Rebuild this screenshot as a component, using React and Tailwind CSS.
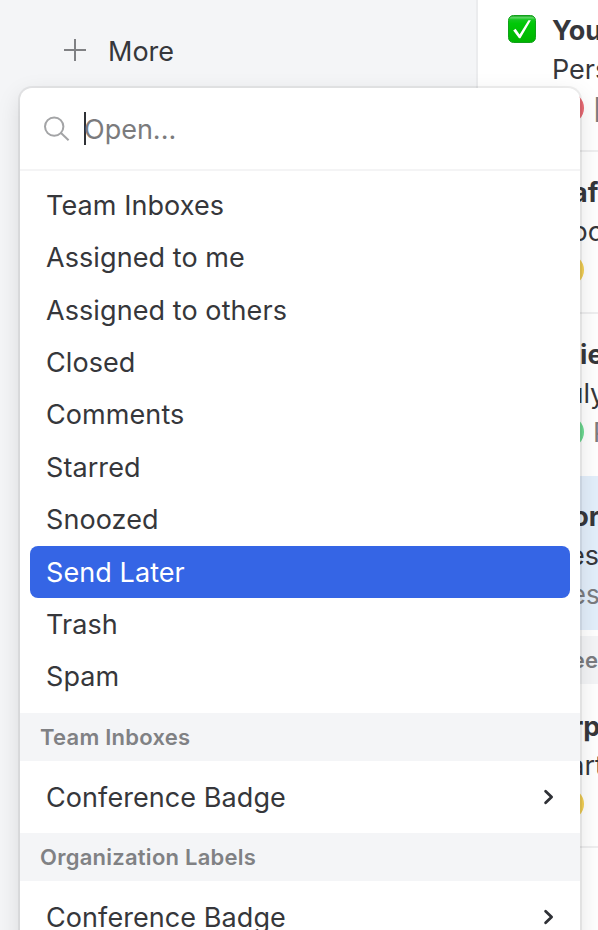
import React from 'react'
import clsx from 'clsx'

const views = [
  'Team Inboxes',
  'Assigned to me',
  'Assigned to others',
  'Closed',
  'Comments',
  'Starred',
  'Snoozed',
  'Send Later',
  'Trash',
  'Spam',
]

const sections = [
  { title: 'Team Inboxes', items: ['Conference Badge'] },
  { title: 'Organization Labels', items: ['Conference Badge'] },
]

const mails = [
  { from: 'You', subject: 'Pers', avatar: 'bg-[#ea6b75]', tag: '[', done: true },
  { from: 'Caf', subject: 'Doc', avatar: 'bg-[#f3d055]' },
  { from: 'Olie', subject: 'July', avatar: 'bg-[#6ddb92]', tag: 'P', last: true },
]

const CheckBadge = () => (
  <svg className="h-7 w-7" viewBox="0 0 28 28">
    <defs>
      <linearGradient id="badge" x1="0" y1="0" x2="0" y2="1">
        <stop offset="0" stopColor="#12a01b" />
        <stop offset="0.08" stopColor="#5fd866" />
        <stop offset="0.16" stopColor="#12c81c" />
        <stop offset="0.3" stopColor="#00c808" />
        <stop offset="1" stopColor="#00b400" />
      </linearGradient>
    </defs>
    <rect x="0.5" y="0.5" width="27" height="27" rx="5" fill="url(#badge)" stroke="#12a01b" />
    <path d="M5.2 15.6L7.6 13.7L11.6 19.4L20.4 5.3L22.9 5.3L12.4 23.2L11 23.2Z" fill="#fff" />
  </svg>
)

const Chevron = () => (
  <svg className="h-4 w-3" viewBox="0 0 12 16" fill="none" stroke="#2f3136" strokeWidth="2.8" strokeLinecap="round" strokeLinejoin="round">
    <path d="M3.6 2.2L9.6 8L3.6 13.8" />
  </svg>
)

const MailRow = ({ mail, selected = false }) => (
  <li className={clsx('h-[162px] shrink-0', !selected && !mail.last && 'border-b-2 border-[#efeff0]')}>
    <div className={clsx('flex pl-[30px] pt-[21px]', selected && 'h-[154px] bg-[#e3effb]')}>
      <div className="w-11 shrink-0 pt-1">{mail.done && <CheckBadge />}</div>
      <div className="whitespace-nowrap text-[27px]">
        <p className="h-10 font-bold leading-10">{mail.from}</p>
        <p className="h-[38px] leading-[38px]">{mail.subject}</p>
        {mail.avatar ? (
          <div className="flex h-[38px] items-center gap-[9px] text-[#7b7c80]">
            <span className={clsx('h-8 w-8 shrink-0 rounded-full', mail.avatar)} />
            <span className="pt-[2px]">{mail.tag}</span>
          </div>
        ) : (
          <p className="h-10 text-[26px] leading-10 text-[#7b7c80]">{mail.note}</p>
        )}
      </div>
    </div>
  </li>
)

const MailList = () => (
  <ul className="-mt-[10px] flex w-[400px] shrink-0 flex-col border-l-2 border-[#ebecee] bg-white">
    {mails.map((mail) => (
      <MailRow key={mail.from} mail={mail} />
    ))}
    <MailRow mail={{ from: 'Gor', subject: 'Res', note: 'Des' }} selected />
    <li className="-mt-[2px] mb-[2px] h-12 shrink-0 bg-[#f4f5f7] pl-[72px] text-[22px] font-semibold leading-[48px] tracking-[0.3px] text-[#7b7c80]">
      Week
    </li>
    <MailRow mail={{ from: 'Arp', subject: 'Part', avatar: 'bg-[#f3d055]' }} />
  </ul>
)

const ViewItem = ({ label, active }) => (
  <li
    className={clsx(
      'flex h-[52.35px] items-center rounded-lg px-4 pt-[1.38px]',
      active && 'bg-[#3565e5] text-white'
    )}
  >
    {label}
  </li>
)

const OpenMenu = () => (
  <div className="absolute left-5 top-[88px] h-[900px] w-[560px] rounded-[12px] bg-white tracking-[0.08px] shadow-[0_0_0_2px_rgba(0,0,0,0.06),0_8px_24px_rgba(0,0,0,0.13)]">
    <div className="flex h-[83px] items-center border-b-2 border-[#f4f4f5] pl-6">
      <svg className="h-[26px] w-[26px]" viewBox="0 0 26 26" fill="none" stroke="#a3a4a6" strokeWidth="2">
        <circle cx="10.2" cy="10.6" r="9.2" />
        <path d="M17 17L24.6 24.2" />
      </svg>
      <span className="ml-[14px] h-[33px] w-[2px] bg-[#2f3136]" />
      <span className="-ml-[2px] pt-[3px] tracking-[0] text-[#7b7b7d]">Open...</span>
    </div>
    <ul className="px-[10px] pb-[10px] pt-[8.5px]">
      {views.map((view) => (
        <ViewItem key={view} label={view} active={view === 'Send Later'} />
      ))}
    </ul>
    {sections.map((section) => (
      <section key={section.title}>
        <h2 className="h-12 bg-[#f4f5f7] pl-5 text-[22px] font-semibold leading-[48px] tracking-[0.25px] text-[#808184]">
          {section.title}
        </h2>
        {section.items.map((item) => (
          <div key={item} className="flex h-[72px] items-center justify-between pl-[26px] pr-[26px]">
            <span className="pt-[2px]">{item}</span>
            <Chevron />
          </div>
        ))}
      </section>
    ))}
  </div>
)

const App = () => {
  return (
    <div className="relative flex h-[930px] w-[598px] overflow-hidden bg-white font-['Inter','Liberation_Sans',sans-serif] text-[27px] text-[#36373b]">
      <aside className="w-[476px] shrink-0 bg-[#f4f5f7] pl-16 pt-[30px]">
        <div className="flex h-10 items-center gap-[22px]">
          <svg className="h-[22px] w-[22px]" viewBox="0 0 22 22" stroke="#808184" strokeWidth="2">
            <path d="M11 0V22M0 11H22" />
          </svg>
          <span className="pt-1">More</span>
        </div>
      </aside>
      <MailList />
      <OpenMenu />
    </div>
  )
}

export default App
